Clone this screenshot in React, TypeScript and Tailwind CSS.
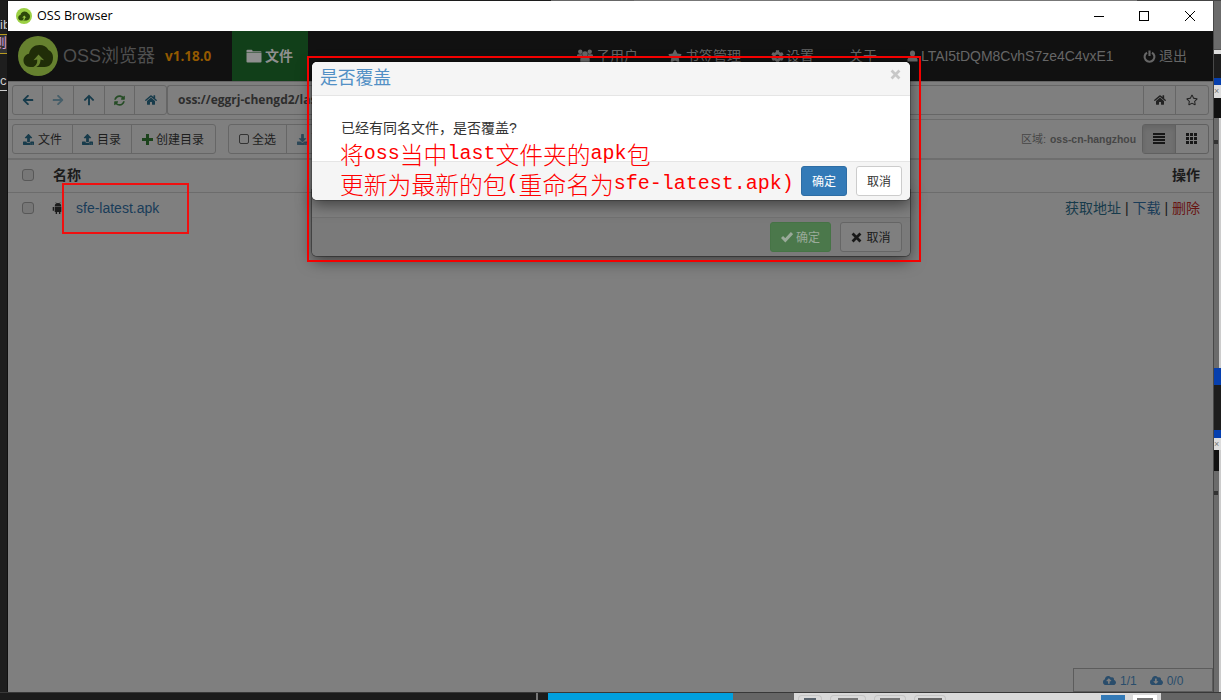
import type { ReactNode } from "react";
import {
  FaArrowLeft, FaArrowRight, FaArrowUp, FaSyncAlt, FaHome, FaUpload, FaDownload,
  FaStar, FaCog, FaCloudUploadAlt, FaCloudDownloadAlt, FaRegStar,
} from "react-icons/fa";

function Logo({ className, back, front }: { className: string; back: string; front: string }) {
  return (
    <svg viewBox="0 0 40 40" className={className}>
      <circle cx="20" cy="20" r="20" fill={back} />
      <path
        d="M12 31C8 31 5.500 28 5.500 24.500c0-3.500 2.300-6.200 5.500-6.700C12.200 12 16.300 9 21.500 9c4 0 7.200 1.700 9 5 3 1.200 4.500 4 4.500 7.500 0 5.500-3 9.500-8.500 9.500z"
        fill={front}
      />
      <path d="M20.500 18.500l-5 5.800 3.700-.700c.300 4-1 6.300-4.700 8 5 .300 8-2.500 8-8l3.600.700z" fill={back} />
    </svg>
  );
}

function FolderIcon() {
  return (
    <svg viewBox="0 0 16 14" className="mr-[3px] h-[14px] w-4 shrink-0" fill="currentColor">
      <path d="M.5 3V1.500Q.5 .8 1.500 .8h4q1 0 1 1V2.200H14.500q1 0 1 .8zM.5 3.500h15v9.200q0 .8-1 .8h-13q-1 0-1-.8z" />
    </svg>
  );
}

function UsersIcon() {
  return (
    <svg viewBox="0 0 16 14" className="mr-[3px] h-[14px] w-4 shrink-0" fill="currentColor">
      <circle cx="3.300" cy="2.700" r="2.200" />
      <circle cx="12.700" cy="2.700" r="2.200" />
      <circle cx="8" cy="5" r="2.800" />
      <path d="M0 8V6.500Q0 5.300 1.500 5.300h3.300L6 8zM16 8V6.500q0-1.200-1.500-1.200h-3.300L10 8zM3.300 13V10q0-2.300 2.200-2.300h5q2.200 0 2.200 2.300v3z" />
    </svg>
  );
}

function UserIcon() {
  return (
    <svg viewBox="0 0 12 12" className="mr-[3px] h-3 w-[11px] shrink-0" fill="currentColor">
      <ellipse cx="6" cy="3.300" rx="2.800" ry="3.200" />
      <path d="M.5 12V9.800Q.5 8.300 3.700 7.200h4.600q3.200 1.100 3.200 2.600V12z" />
    </svg>
  );
}

function PowerIcon() {
  return (
    <svg viewBox="0 0 14 14" className="mr-[3px] size-[13px] shrink-0" fill="none" stroke="currentColor" strokeWidth="2.300">
      <path d="M4.300 2.800A5.300 5.300 0 1 0 9.700 2.800M7 0.500V6.500" />
    </svg>
  );
}

function AndroidIcon() {
  return (
    <svg viewBox="0 0 12 14" className="ml-[18px] h-[13px] w-3 shrink-0" fill="currentColor">
      <path d="M2.500 4.500C2.500 2.500 4 1.200 6 1.200s3.500 1.300 3.500 3.300zM2.500 5h7v5.700h-1V13H7v-2.300H5V13H3.500v-2.300h-1zM.3 5.500h1.500v4H.3zM10.200 5.500h1.500v4h-1.500z" />
      <path d="M3.500.3l1 1.500M8.500.3l-1 1.500" stroke="currentColor" strokeWidth=".6" />
    </svg>
  );
}

function PlusIcon() {
  return (
    <svg viewBox="0 0 11 11" className="mr-[3px] size-[11px] shrink-0 text-[#1c431c]" fill="currentColor">
      <path d="M4 0h3v4h4v3H7v4H4V7H0V4h4z" />
    </svg>
  );
}

function ListIcon() {
  return (
    <svg viewBox="0 0 12 12" className="size-3" fill="currentColor" shapeRendering="crispEdges">
      <path d="M0 0h12v2H0zM0 3h12v2H0zM0 6h12v2H0zM0 9h12v2H0z" />
    </svg>
  );
}

function GridIcon() {
  return (
    <svg viewBox="0 0 12 12" className="size-3" fill="currentColor" shapeRendering="crispEdges">
      <path d="M0 0h3v3H0zM4 0h3v3H4zM8 0h3v3H8zM0 4h3v3H0zM4 4h3v3H4zM8 4h3v3H8zM0 8h3v3H0zM4 8h3v3H4zM8 8h3v3H8z" />
    </svg>
  );
}

function OkIcon() {
  return (
    <svg viewBox="0 0 12 12" className="size-3" fill="none" stroke="currentColor" strokeWidth="3">
      <path d="M1 6l3.300 3.300L11 2" />
    </svg>
  );
}

function CrossIcon({ className }: { className: string }) {
  return (
    <svg viewBox="0 0 12 12" className={className} fill="none" stroke="currentColor" strokeWidth="3">
      <path d="M1.700 1.700l8.600 8.600M10.300 1.700l-8.600 8.600" />
    </svg>
  );
}

function NavItem({ className, children }: { className: string; children: ReactNode }) {
  return <div className={`flex h-full shrink-0 items-center whitespace-nowrap ${className}`}>{children}</div>;
}

function Check() {
  return <span className="block size-3 rounded-[3px] border border-[#585858] bg-[#777]" />;
}

function TitleBar() {
  return (
    <div className="flex h-[30px] shrink-0 items-center bg-white pl-2 text-black">
      <Logo className="size-4" back="#9bd044" front="#2c4a0b" />
      <span className="ml-[5px] w-[77px] whitespace-nowrap font-['Open_Sans','Noto_Sans',sans-serif] text-[12.600px]">OSS Browser</span>
      <div className="ml-auto flex items-center pr-[18px]">
        <svg viewBox="0 0 101 10" className="h-[10px] w-[101px]" fill="none" stroke="#000" shapeRendering="crispEdges">
          <path d="M0 5.500H10" />
          <rect x="45.500" y="0.500" width="9" height="9" />
          <path d="M91 0L101 10M101 0L91 10" shapeRendering="auto" />
        </svg>
      </div>
    </div>
  );
}

function NavBar() {
  return (
    <div className="flex h-[50px] shrink-0 items-center bg-[#111] pl-[10px] text-[14px] text-[#666]">
      <Logo className="size-10 shrink-0" back="#66812f" front="#202d08" />
      <span className="ml-[5px] w-[93px] whitespace-nowrap text-[18px] leading-[46px] text-[#4f4f4f]">OSS浏览器</span>
      <span className="ml-[9px] w-[67px] pt-px font-['Open_Sans','Noto_Sans',sans-serif] text-[13.500px] font-bold text-[#945900]">v1.18.0</span>
      <div className="flex h-full w-[76px] shrink-0 items-center bg-[#113f19] pl-[14px] font-bold text-[#8f8f8f]">
        <FolderIcon />文件
      </div>
      <NavItem className="ml-[269px] w-[91px]"><UsersIcon />子用户</NavItem>
      <NavItem className="w-[103px]"><FaStar className="mr-[3px] size-[14px]" />书签管理</NavItem>
      <NavItem className="w-[78px]"><FaCog className="mr-[2px] size-[13px]" />设置</NavItem>
      <NavItem className="w-[58px]">关于</NavItem>
      <NavItem className="w-[236px]"><UserIcon /><span className="tracking-[-0.03px]">LTAI5tDQM8CvhS7ze4C4vxE1</span></NavItem>
      <NavItem className="w-[60px]"><PowerIcon />退出</NavItem>
    </div>
  );
}

function AddressBar() {
  const cell = "flex h-full shrink-0 items-center justify-center border-r border-[#666]";
  return (
    <div className="flex h-[38px] shrink-0 items-start border-t border-[#666] px-1 pt-[3px]">
      <div className="flex h-[30px] w-[155px] rounded-[3px] border border-[#666] text-[12px] text-[#173b4b]">
        <div className={`${cell} w-[30px]`}><FaArrowLeft /></div>
        <div className={`${cell} w-[31px] text-[#465e69]`}><FaArrowRight /></div>
        <div className={`${cell} w-[31px]`}><FaArrowUp /></div>
        <div className={`${cell} w-[30px] text-[#254c25]`}><FaSyncAlt className="size-[11px]" /></div>
        <div className="flex flex-1 items-center justify-center"><FaHome /></div>
      </div>
      <div className="flex h-[30px] flex-1 items-center rounded-l-[3px] border-y border-l border-[#666] pl-[10px] font-['Open_Sans','Noto_Sans',sans-serif] text-[12px] font-bold text-[#2d2d2d]">
        oss://eggrj-chengd2/last/
      </div>
      <div className="flex h-[30px] w-[66px] rounded-r-[3px] border border-[#666] text-[12px] text-[#222]">
        <div className={`${cell} w-8`}><FaHome /></div>
        <div className="flex flex-1 items-center justify-center"><FaRegStar /></div>
      </div>
    </div>
  );
}

function Toolbar() {
  return (
    <div className="flex h-[39px] shrink-0 items-start border-t border-[#6c6c6c] px-1 pt-1 text-[12px] text-[#1d1d1d]">
      <div className="flex h-[30px] w-[204px] rounded-[3px] border border-[#666]">
        <div className="flex w-[60px] items-center whitespace-nowrap border-r border-[#666] pl-[10px] pt-px"><FaUpload className="mr-1 size-[11px] text-[#173b4b]" />文件</div>
        <div className="flex w-[59px] items-center whitespace-nowrap border-r border-[#666] pl-[9px] pt-px"><FaUpload className="mr-1 size-[11px] text-[#173b4b]" />目录</div>
        <div className="flex items-center whitespace-nowrap pl-[10px] pt-px"><PlusIcon />创建目录</div>
      </div>
      <div className="ml-3 flex h-[30px] w-[180px] rounded-[3px] border border-[#666]">
        <div className="flex w-[58px] items-center whitespace-nowrap border-r border-[#666] pl-[10px]"><span className="mr-[3px] size-[10px] rounded-[2px] border border-[#333]" /><span className="pt-px">全选</span></div>
        <div className="flex items-center whitespace-nowrap pl-[10px] text-[#2f4a5a]"><FaDownload className="mr-[3px] size-[11px]" />下载</div>
      </div>
      <div className="ml-auto mr-[7px] flex h-[30px] items-center whitespace-nowrap text-[11px] text-[#464646]">
        <span className="mr-1">区域:</span><span className="w-[85px] pt-px text-[10.400px] font-bold">oss-cn-hangzhou</span>
      </div>
      <div className="flex h-[30px] w-[67px] rounded-[3px] border border-[#606060] text-[12px] text-[#171717]">
        <div className="flex w-[33px] items-center justify-center border-r border-[#606060] bg-[#707070] shadow-[inset_0_3px_5px_rgba(0,0,0,0.1)]"><ListIcon /></div>
        <div className="flex flex-1 items-center justify-center"><GridIcon /></div>
      </div>
    </div>
  );
}

function FileTable() {
  return (
    <div className="flex shrink-0 flex-col border-t-2 border-[#6e6e6e] text-[14px] text-[#1b1b1b]">
      <div className="flex h-[33px] items-center border-b border-[#6c6c6c] pb-[2px] pl-[14px] pr-[13px] font-bold">
        <Check /><span className="ml-[19px]">名称</span><span className="ml-auto">操作</span>
      </div>
      <div className="flex h-8 items-center pb-[2px] pl-[14px] pr-[13px]">
        <Check /><AndroidIcon />
        <span className="ml-[12px] text-[#193c59]">sfe-latest.apk</span>
        <div className="ml-auto flex w-[135px] justify-between whitespace-nowrap">
          <span className="text-[#173b4b]">获取地址</span>|<span className="text-[#193c59]">下载</span>|<span className="text-[#681513]">删除</span>
        </div>
      </div>
    </div>
  );
}

function Dialogs() {
  return (
    <>
      <div className="absolute left-[312px] top-[190px] flex h-[66px] w-[598px] flex-col rounded-b-[5px] bg-[#7f7f7f] text-[12px] shadow-[0_0_0_1px_rgba(0,0,0,0.3),0_5px_15px_rgba(0,0,0,0.5)]">
        <div className="mt-auto flex h-[39px] items-center justify-end gap-[9px] rounded-b-[5px] border-t border-[#727272] bg-[#7a7a7a] pr-2">
          <div className="flex h-[30px] w-[61px] items-center justify-center gap-[3px] rounded-[3px] border border-[#467446] bg-[#4b784b] text-[#9aaa9a]"><OkIcon /><span className="pt-[2px]">确定</span></div>
          <div className="flex h-[30px] w-[62px] items-center justify-center gap-1 rounded-[3px] border border-[#666] bg-[#7f7f7f] text-[#191919]"><CrossIcon className="size-[11px]" /><span className="pt-[2px]">取消</span></div>
        </div>
      </div>
      <div className="absolute left-[312px] top-[62px] flex h-[138px] w-[598px] flex-col overflow-hidden rounded-[5px] bg-white text-[#333] shadow-[0_0_0_1px_rgba(0,0,0,0.2),0_5px_15px_rgba(0,0,0,0.5)]">
        <div className="flex h-[34px] shrink-0 justify-between border-b border-[#e5e5e5] bg-[#f5f5f5] pl-2 pr-[9px]">
          <span className="text-[17.800px] leading-[32px] text-[#5290c5]">是否覆盖</span>
          <CrossIcon className="mt-[7px] size-[11px] text-[#c8c8c8]" />
        </div>
        <div className="flex-1 pl-[29px] pt-[22px] text-[14px] leading-5">已经有同名文件，是否覆盖?</div>
        <div className="flex h-[39px] shrink-0 items-center justify-end gap-[9px] border-t border-[#e5e5e5] bg-[#f5f5f5] pr-2 text-[12px]">
          <div className="flex h-[30px] w-[46px] items-center justify-center rounded-[3px] border border-[#2e6da4] bg-[#337ab7] pt-[2px] text-white">确定</div>
          <div className="flex h-[30px] w-[46px] items-center justify-center rounded-[3px] border border-[#ccc] bg-white pt-[2px]">取消</div>
        </div>
      </div>
    </>
  );
}

function Mono({ children }: { children: ReactNode }) {
  return <span className="font-['Liberation_Mono',monospace] text-[20px] font-normal leading-[24px]">{children}</span>;
}

function Annotations() {
  return (
    <>
      <div className="absolute left-[307px] top-[56px] h-[206px] w-[614px] border-2 border-[#f40000]" />
      <div className="absolute left-[62px] top-[183px] h-[51px] w-[127px] border-2 border-[#f01010]" />
      <div className="absolute left-[340px] top-[139px] flex flex-col whitespace-nowrap font-['Noto_Sans_CJK_SC',sans-serif] text-[23.800px] font-light text-[#ff0000]">
        <div className="flex h-[30px] items-center leading-[26px]">将<Mono>oss</Mono>当中<Mono>last</Mono>文件夹的<Mono>apk</Mono>包</div>
        <div className="flex h-[30px] items-center leading-[26px]">更新为最新的包<Mono>(</Mono>重命名为<Mono>sfe-latest.apk)</Mono></div>
      </div>
    </>
  );
}

export default function App() {
  return (
    <div className="relative flex h-[700px] w-[1221px] flex-col overflow-hidden bg-[#1c1c1c] font-['Liberation_Sans','Noto_Sans_CJK_SC',sans-serif]">
      <div className="flex h-px shrink-0 bg-[#1c1c1c]">
        <div className="ml-[551px] w-[83px] bg-[#666]" /><div className="w-[503px] bg-[#777]" /><div className="flex-1 bg-[#444]" />
      </div>
      <div className="flex h-[691px] shrink-0">
        <div className="flex w-2 shrink-0 flex-col overflow-hidden border-r border-[#111] bg-[#1e1e1e] text-[13px] leading-4 text-[#ccc]">
          <span className="mt-[16px] h-[17px]">ib</span>
          <span className="-ml-[6px] h-5 border-y border-[#b99b20] bg-[#333] text-[#d9a0d9]">则</span>
          <span className="mt-[19px] h-[18px] border-b border-[#ccc]">cr</span>
        </div>
        <div className="flex w-[1205px] shrink-0 flex-col bg-[#7f7f7f]">
          <TitleBar />
          <NavBar />
          <AddressBar />
          <Toolbar />
          <FileTable />
          <div className="mt-auto flex h-6 w-[140px] shrink-0 items-center self-end border border-[#5c5c5c] pl-[29px] text-[12px] text-[#2a4d6b]">
            <FaCloudUploadAlt className="mr-1 size-[13px]" /><span className="pt-px">1/1</span>
            <FaCloudDownloadAlt className="ml-[13px] mr-1 size-[13px]" /><span className="pt-px">0/0</span>
          </div>
        </div>
        <div className="flex w-2 shrink-0 flex-col overflow-hidden border-l border-[#484848] bg-[#6b6b6b]">
          <div className="h-[49px] shrink-0 border-b border-[#555]" />
          <div className="h-[4px] shrink-0 bg-[#ddd]" />
          <div className="h-[24px] shrink-0 bg-[#1d1d1d]" />
          <div className="h-[7px] shrink-0 bg-[#063fae]" />
          <div className="h-[13px] shrink-0 bg-[#ddd] text-[9px] leading-[13px] text-[#777]">×</div>
          <div className="h-[20px] shrink-0 bg-[#111]" />
          <div className="h-[250px] shrink-0 border-r-2 border-[#ccc] bg-[#6b6b6b] pt-[22px]">
            <div className="h-[4px] w-1 bg-[#333]" />
          </div>
          <div className="h-[17px] shrink-0 bg-[#063fae]" />
          <div className="h-[45px] shrink-0 bg-[#1d1d1d]" />
          <div className="h-[8px] shrink-0 bg-[#063fae]" />
          <div className="h-[12px] shrink-0 bg-[#ddd] text-[9px] leading-[12px] text-[#777]">×</div>
          <div className="h-[21px] shrink-0 border-r-2 border-[#ccc] bg-[#111]" />
          <div className="flex-1 border-r-2 border-[#ccc] bg-[#6b6b6b] pt-[20px]">
            <div className="h-[4px] w-1 bg-[#333]" />
          </div>
        </div>
      </div>
      <div className="flex h-2 shrink-0 border-t border-[#383838]">
        <div className="ml-[536px] w-[2px] bg-[#777]" />
        <div className="ml-[10px] w-[185px] bg-[#00a0df]" />
        <div className="w-[61px] bg-[#666]" />
        <div className="flex w-[367px] items-end gap-2 bg-[#d9d9d9] pl-1">
          <div className="flex h-[5px] w-6 items-end justify-center rounded-t-sm border border-b-0 border-[#c5c5c5]"><span className="h-[2px] w-3 bg-[#59636d]" /></div>
          <div className="flex h-[5px] w-9 items-end justify-center rounded-t-sm border border-b-0 border-[#c5c5c5]"><span className="h-[2px] w-5 bg-[#777]" /></div>
          <div className="flex h-[5px] w-8 items-end justify-center rounded-t-sm border border-b-0 border-[#c5c5c5]"><span className="h-[2px] w-5 bg-[#777]" /></div>
          <div className="flex h-[5px] w-8 items-end justify-center rounded-t-sm border border-b-0 border-[#c5c5c5]"><span className="h-[2px] w-6 bg-[#666]" /></div>
          <div className="ml-auto h-[5px] w-6 bg-[#337ab7]" />
          <div className="mr-1 flex h-[5px] w-6 items-end justify-center bg-white"><span className="h-[2px] w-4 bg-[#777]" /></div>
        </div>
        <div className="flex-1 bg-[#656565]" />
      </div>
      <Dialogs />
      <Annotations />
    </div>
  );
}
